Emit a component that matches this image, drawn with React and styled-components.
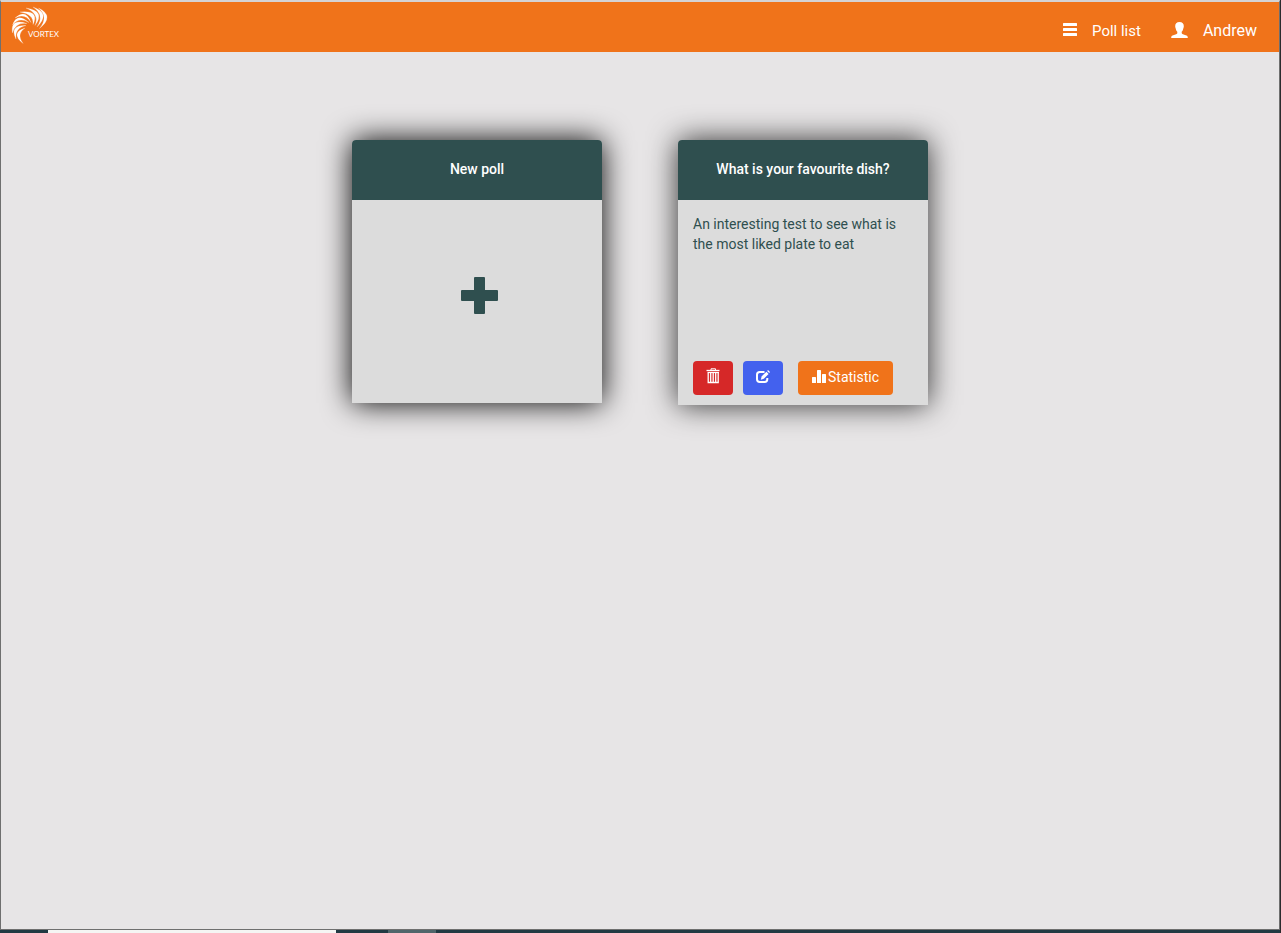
import React from "react";
import styled, { createGlobalStyle } from "styled-components";

const GlobalStyle = createGlobalStyle`
  *, *::before, *::after { box-sizing: border-box; }
  body {
    margin: 0;
    background: #e7e5e6;
    color: #2f4f4f;
    font-family: Roboto, "Liberation Sans", sans-serif;
    font-size: 14px;
    line-height: 20px;
  }
`;

const Window = styled.div`
  display: flex;
  flex-direction: column;
  min-height: 100vh;
  border-right: 1px solid #2b2b2d;
`;

const Page = styled.div`
  flex: 1;
  display: flex;
  flex-direction: column;
  border: 1px solid #6f6f6f;
  border-top: 2px solid #d5d3d4;
`;

const NavBar = styled.nav`
  display: flex;
  justify-content: space-between;
  align-items: flex-start;
  height: 50px;
  padding: 3px 22px 0 8px;
  background: #f0731a;
`;

const Brand = styled.a`
  display: block;
  height: 42px;
`;

const NavLinks = styled.div`
  display: flex;
  align-items: center;
  gap: 30px;
  padding-top: 16px;
`;

const NavLink = styled.a`
  display: flex;
  align-items: center;
  gap: 15px;
  color: #fff;
  font-size: ${(p) => p.$size};
  text-decoration: none;
`;

const Cards = styled.main`
  display: flex;
  flex-wrap: wrap;
  justify-content: center;
  align-items: flex-start;
  gap: 76px;
  padding: 88px 16px;
`;

const Card = styled.section`
  display: flex;
  flex-direction: column;
  width: 250px;
  border-radius: 4px 4px 0 0;
  background: #dcdcdc;
  box-shadow: 0 0 30px rgba(0, 0, 0, ${(p) => (p.$raised ? 1 : 0.8)});
`;

const CardTitle = styled.h2`
  margin: 0;
  padding: 19px 15px 21px;
  border-radius: 4px 4px 0 0;
  background: #2f4f4f;
  color: #fff;
  font-size: 14px;
  font-weight: 500;
  line-height: 20px;
  text-align: center;
`;

const AddButton = styled.button`
  display: flex;
  justify-content: center;
  align-items: center;
  height: 203px;
  padding: 0 0 12px 5px;
  border: 0;
  background: none;
  color: #2f4f4f;
  cursor: pointer;
`;

const Description = styled.p`
  min-height: 147px;
  margin: 0;
  padding: 0 15px;
`;

const CardBody = styled.div`
  padding: 14px 0 10px;
`;

const Actions = styled.div`
  display: flex;
  gap: 10px;
  padding: 0 15px;
`;

const ActionButton = styled.button`
  display: flex;
  align-items: center;
  justify-content: center;
  gap: 2px;
  height: 34px;
  padding: 0 14px 2px;
  margin-left: 5px;
  border: 0;
  border-radius: 4px;
  background: ${(p) => p.$color};
  color: #fff;
  font: 400 14px/20px Roboto, "Liberation Sans", sans-serif;
  cursor: pointer;
`;

const IconButton = styled(ActionButton)`
  width: 40px;
  padding: 0 0 2px;
  margin-left: 0;
`;

const TaskBar = styled.footer`
  display: flex;
  height: 3px;
  background: #213a43;
`;

const TaskItem = styled.span`
  width: ${(p) => p.$width};
  margin-left: ${(p) => p.$gap};
  background: ${(p) => p.$color};
`;

const LogoText = styled.text`
  fill: #fff;
  font-family: Lato, sans-serif;
  font-size: 8px;
`;

const blades = [
  "M29.500 3 Q46 11 30.500 23.500 Q40 12 29.500 3Z",
  "M24 2 Q42 8 28 22 Q36 10 24 2Z",
  "M17 3 Q37 6 26 20.500 Q31 9 17 3Z",
  "M11 7 Q31 5 24 19.500 Q25 9 11 7Z",
  "M6 13 Q17 3 22 17.500 Q16 7.500 6 13Z",
  "M3.500 20 Q8 7 20 17.500 Q10 11.500 3.500 20Z",
  "M3.500 28 Q1 13 18 18.500 Q6.500 17 3.500 28Z",
  "M7 34 Q0 20 17 20.500 Q5.500 23 7 34Z",
  "M14 38.500 Q1 28 16 23 Q7 29 14 38.500Z",
];

const Logo = () => (
  <svg width="54" height="42" viewBox="0 0 54 42" role="img" aria-label="Vortex logo">
    <g fill="#fff" stroke="#fff" strokeWidth="0.2">
      {blades.map((d) => (
        <path key={d} d={d} />
      ))}
    </g>
    <LogoText x="19" y="32">VORTEX</LogoText>
  </svg>
);

const MenuIcon = () => (
  <svg width="14" height="16" viewBox="0 0 14 16" fill="currentColor" aria-hidden="true">
    <rect y="0" width="14" height="3" rx="0.5" />
    <rect y="5" width="14" height="3" rx="0.5" />
    <rect y="10" width="14" height="3" rx="0.5" />
  </svg>
);

const UserIcon = () => (
  <svg width="17" height="18" viewBox="0 0 17 18" fill="currentColor" aria-hidden="true">
    <path d="M8.500 0C5.600 0 4.100 1.700 4.200 4.200c0 1.200.3 1.700.5 2.200.4 1.900 1 2.700 1.600 3.300v1.300c0 .6-.5 1-1.200 1.300L1.600 13.600C.6 14 .2 14.700.2 16h16.600c0-1.300-.4-2-1.400-2.400l-3.500-1.300c-.7-.3-1.200-.7-1.200-1.300V9.700c.6-.6 1.200-1.400 1.600-3.300.2-.5.5-1 .5-2.200C12.900 1.700 11.400 0 8.500 0Z" />
  </svg>
);

const PlusIcon = () => (
  <svg width="37" height="37" viewBox="0 0 37 37" fill="currentColor" aria-hidden="true">
    <rect x="13" y="0" width="11" height="37" rx="1" />
    <rect x="0" y="13" width="37" height="11" rx="1" />
  </svg>
);

const TrashIcon = () => (
  <svg width="14" height="18" viewBox="0 0 14 18" fill="none" stroke="currentColor" aria-hidden="true">
    <path d="M5 2V.8h4.500V2" />
    <path d="M.5 2.500h13" strokeWidth="1.300" />
    <path d="M1.500 4.500h11.500" strokeWidth="1.200" />
    <path d="M2.200 5v9.500h10V5M4.700 5v9.500M7.200 5v9.500M9.700 5v9.500" strokeWidth="1.300" />
  </svg>
);

const EditIcon = () => (
  <svg width="14" height="14" viewBox="0 0 14 14" fill="none" stroke="currentColor" aria-hidden="true">
    <path d="M8.500 2H3.800Q1 2 1 4.700v4.600Q1 12 3.800 12h4.800Q11.300 12 11.300 9.300V8" strokeWidth="2" />
    <path d="M4.800 9.700l.8-3.200L10.400 1.700l2.200 2.200-4.800 4.900z" fill="currentColor" stroke="none" />
    <path d="M11.200.9l.8-.8 2 2-.8.9z" fill="currentColor" stroke="none" />
  </svg>
);

const StatsIcon = () => (
  <svg width="14" height="14" viewBox="0 0 14 14" fill="currentColor" aria-hidden="true">
    <rect x="0" y="7" width="4" height="6" rx="0.5" />
    <rect x="5" y="0" width="4" height="13" rx="0.5" />
    <rect x="10" y="4" width="4" height="9" rx="0.5" />
  </svg>
);

export default function App() {
  return (
    <Window>
      <GlobalStyle />
      <Page>
        <NavBar>
          <Brand href="#home">
            <Logo />
          </Brand>
          <NavLinks>
            <NavLink href="#polls" $size="15px">
              <MenuIcon />
              Poll list
            </NavLink>
            <NavLink href="#profile" $size="16px">
              <UserIcon />
              Andrew
            </NavLink>
          </NavLinks>
        </NavBar>
        <Cards>
          <Card $raised>
            <CardTitle>New poll</CardTitle>
            <AddButton type="button" aria-label="Add poll">
              <PlusIcon />
            </AddButton>
          </Card>
          <Card>
            <CardTitle>What is your favourite dish?</CardTitle>
            <CardBody>
              <Description>
                An interesting test to see what is the most liked plate to eat
              </Description>
              <Actions>
                <IconButton type="button" aria-label="Delete" $color="#d62828">
                  <TrashIcon />
                </IconButton>
                <IconButton type="button" aria-label="Edit" $color="#4361ee">
                  <EditIcon />
                </IconButton>
                <ActionButton type="button" $color="#f0731a">
                  <StatsIcon />
                  Statistic
                </ActionButton>
              </Actions>
            </CardBody>
          </Card>
        </Cards>
      </Page>
      <TaskBar>
        <TaskItem $gap="48px" $width="288px" $color="#f5f5f3" />
        <TaskItem $gap="52px" $width="48px" $color="#50666b" />
      </TaskBar>
    </Window>
  );
}
